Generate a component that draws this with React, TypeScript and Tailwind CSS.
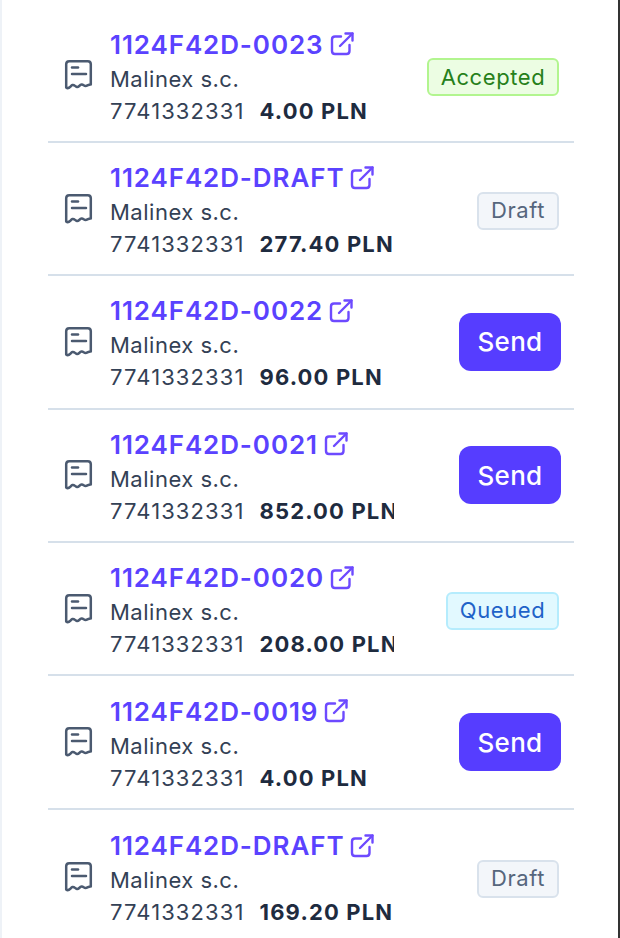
const FONT = "font-['Inter',sans-serif]";

type Status = "accepted" | "draft" | "send" | "queued";

interface Invoice {
  number: string;
  amount: string;
  status: Status;
}

const invoices: Invoice[] = [
  { number: "1124F42D-0023", amount: "4.00 PLN", status: "accepted" },
  { number: "1124F42D-DRAFT", amount: "277.40 PLN", status: "draft" },
  { number: "1124F42D-0022", amount: "96.00 PLN", status: "send" },
  { number: "1124F42D-0021", amount: "852.00 PLN", status: "send" },
  { number: "1124F42D-0020", amount: "208.00 PLN", status: "queued" },
  { number: "1124F42D-0019", amount: "4.00 PLN", status: "send" },
  { number: "1124F42D-DRAFT", amount: "169.20 PLN", status: "draft" },
];

const ReceiptIcon = () => (
  <svg width="32" height="32" viewBox="0 0 32 32" fill="none" stroke="#4b5a70" strokeWidth="2.5" strokeLinecap="round" strokeLinejoin="round">
    <path d="M3.2 28.5V5.2C3.2 3.5 4.5 2.2 6.2 2.2H24.8C26.5 2.2 27.8 3.5 27.8 5.2V25.5C26 25 24.5 27 22.5 27C21 27 20 25 18.5 25.5C16.5 26 15.5 28.5 14 28C12 27.5 11.5 25.5 9.5 26C7.5 26.5 6 31 3.2 28.5Z" />
    <path d="M9 8.5H15" />
    <path d="M9 15H23" />
  </svg>
);

const ExternalIcon = () => (
  <svg width="26" height="26" viewBox="0 0 26 26" fill="none" stroke="#6d4aff" strokeWidth="2.4" strokeLinecap="round" strokeLinejoin="round">
    <path d="M12 5.5H6C4.3 5.5 3 6.8 3 8.5V20C3 21.7 4.3 23 6 23H17.5C19.2 23 20.5 21.7 20.5 20V14" />
    <path d="M11 15L23.5 2.5" />
    <path d="M16.5 2.5H23.5V9.5" />
  </svg>
);

const StatusCell = ({ status }: { status: Status }) => {
  if (status === "send") {
    return (
      <button className="w-[102px] h-[58px] rounded-[12px] bg-[#563dff] text-white text-[26px] font-[550] tracking-[0.3px]">
        Send
      </button>
    );
  }
  if (status === "accepted") {
    return (
      <span className="mr-[2px] mt-[4px] h-[38px] w-[132px] justify-center flex items-center rounded-[6px] border-2 border-[#b2f58f] bg-[#ecfde3] text-[#26801a] text-[22px] tracking-[0.6px]">
        Accepted
      </span>
    );
  }
  if (status === "queued") {
    return (
      <span className="mr-[2px] mt-[4px] h-[38px] w-[113px] justify-center flex items-center rounded-[6px] border-2 border-[#b5ecfd] bg-[#e2f9ff] text-[#1f63c8] text-[22px] tracking-[0.6px]">
        Queued
      </span>
    );
  }
  return (
    <span className="mr-[2px] mt-[4px] h-[38px] w-[82px] justify-center flex items-center rounded-[6px] border-2 border-[#d9e2ec] bg-[#f3f6fa] text-[#56667d] text-[22px] tracking-[0.6px]">
      Draft
    </span>
  );
};

export default function App() {
  return (
    <div className={`${FONT} h-[938px] w-[620px] overflow-hidden bg-white border-l-2 border-l-[#eef2f7] border-r-2 border-r-[#333333]`}>
      <div className="mx-[46px] pt-[9.5px] w-[526px]">
        {invoices.map((invoice, i) => (
          <div key={i} className="h-[133.4px] flex items-center border-b-2 border-[#d6e0ea] last:border-b-0 pl-[15px] pr-[13px]">
            <ReceiptIcon />
            <div className="ml-[15px] pt-[2px] w-[284px] overflow-hidden whitespace-nowrap">
              <div className="flex items-center gap-[5px] h-[38px] text-[26px] font-semibold text-[#5a42ff] tracking-[0.9px]">
                {invoice.number}
                <ExternalIcon />
              </div>
              <div className="h-[32px] flex items-center text-[22px] text-[#334155] tracking-[0.5px]">Malinex s.c.</div>
              <div className="h-[32px] flex items-center text-[22px] text-[#334155]">
                <span className="tracking-[1.1px]">7741332331</span>
                <span className="ml-[15px] font-bold text-[#1e2b3f] tracking-[1.15px]">{invoice.amount}</span>
              </div>
            </div>
            <div className="flex-1 flex justify-end">
              <StatusCell status={invoice.status} />
            </div>
          </div>
        ))}
      </div>
    </div>
  );
}
